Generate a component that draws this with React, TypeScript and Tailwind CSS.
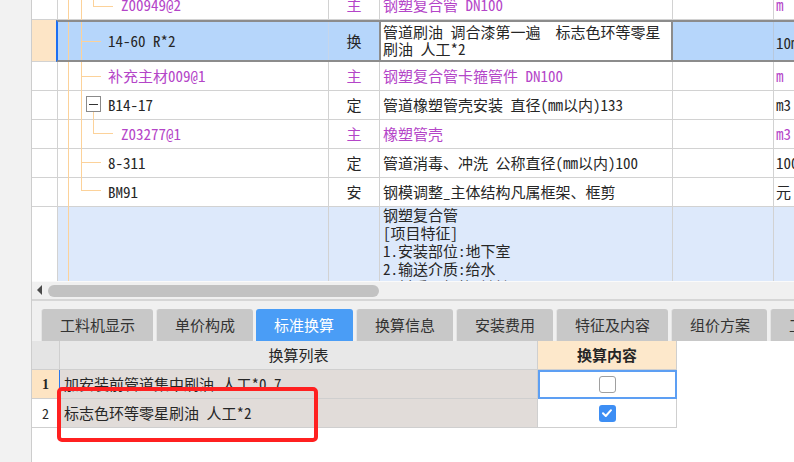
import React from "react";

const PURPLE = "text-[#b445c8]";

type RowData = {
  code: string;
  indent: string;
  codePurple?: boolean;
  type: string;
  typePurple?: boolean;
  name: string;
  namePurple?: boolean;
  unit: string;
  unitPurple?: boolean;
};

const rowsAfter: RowData[] = [
  { code: "补充主材009@1", indent: "pl-[50px]", codePurple: true, type: "主", typePurple: true, name: "钢塑复合管卡箍管件 DN100", namePurple: true, unit: "m", unitPurple: true },
  { code: "B14-17", indent: "pl-[50px]", type: "定", name: "管道橡塑管壳安装 直径(mm以内)133", unit: "m3" },
  { code: "Z03277@1", indent: "pl-[63px]", codePurple: true, type: "主", typePurple: true, name: "橡塑管壳", namePurple: true, unit: "m3", unitPurple: true },
  { code: "8-311", indent: "pl-[50px]", type: "定", name: "管道消毒、冲洗 公称直径(mm以内)100", unit: "100" },
  { code: "BM91", indent: "pl-[50px]", type: "安", name: "钢模调整_主体结构凡属框架、框剪", unit: "元" },
];

function Row({ r }: { r: RowData }) {
  return (
    <div className="flex h-[29px] border-b border-[#d2d2d2] bg-white">
      <div className="w-[26px] shrink-0 border-r border-[#d2d2d2]" />
      <div className={`w-[271px] shrink-0 border-r border-[#d2d2d2] flex items-center whitespace-nowrap ${r.indent} ${r.codePurple ? PURPLE : ""}`}>
        {r.code}
      </div>
      <div className={`w-[51px] shrink-0 border-r border-[#d2d2d2] flex items-center justify-center ${r.typePurple ? PURPLE : ""}`}>
        {r.type}
      </div>
      <div className={`w-[293px] shrink-0 border-r border-[#d2d2d2] flex items-center pl-[3px] whitespace-nowrap overflow-hidden ${r.namePurple ? PURPLE : ""}`}>
        {r.name}
      </div>
      <div className="w-[101px] shrink-0 border-r border-[#d2d2d2]" />
      <div className={`flex-1 flex items-center pl-[2px] whitespace-nowrap overflow-hidden ${r.unitPurple ? PURPLE : ""}`}>
        {r.unit}
      </div>
    </div>
  );
}

function TreeLines() {
  const c = "#fcd29a";
  return (
    <svg className="absolute left-[26px] top-0" width={271} height={281} shapeRendering="crispEdges">
      <g stroke={c} strokeWidth={1} fill="none">
        <line x1={10.5} y1={0} x2={10.5} y2={20} />
        <line x1={10.5} y1={22} x2={10.5} y2={60} />
        <line x1={10.5} y1={62} x2={10.5} y2={281} />
        <line x1={23.5} y1={0} x2={23.5} y2={20} />
        <line x1={23.5} y1={22} x2={23.5} y2={60} />
        <line x1={23.5} y1={62} x2={23.5} y2={190.5} />
        <line x1={35.5} y1={0} x2={35.5} y2={6.5} />
        <line x1={35.5} y1={6.5} x2={55} y2={6.5} />
        <line x1={23.5} y1={41.5} x2={43} y2={41.5} />
        <line x1={23.5} y1={76.5} x2={43} y2={76.5} />
        <line x1={35.5} y1={111.5} x2={35.5} y2={133.5} />
        <line x1={35.5} y1={133.5} x2={55} y2={133.5} />
        <line x1={23.5} y1={162.5} x2={43} y2={162.5} />
        <line x1={23.5} y1={190.5} x2={43} y2={190.5} />
      </g>
      <rect x={28.5} y={96.5} width={14} height={15} fill="#ffffff" stroke="#8a8a8a" strokeWidth={1} />
      <line x1={31} y1={104.5} x2={40} y2={104.5} stroke="#333" strokeWidth={1} />
    </svg>
  );
}

function TopGrid() {
  return (
    <div className="relative h-[281px] overflow-hidden bg-white shrink-0">
      <div className="-mt-[9px]">
        <Row r={{ code: "Z00949@2", indent: "pl-[63px]", codePurple: true, type: "主", typePurple: true, name: "钢塑复合管 DN100", namePurple: true, unit: "m", unitPurple: true }} />
        {/* selected row */}
        <div className="flex h-[42px]">
          <div className="w-[24px] shrink-0 bg-[#fde5c6] border-b border-[#d2d2d2]" />
          <div className="flex-1 flex border-y-2 border-[#8c8c8c] border-l-2 border-l-[#1d6ff2] bg-[#b6d6fb]">
            <div className="w-[271px] shrink-0 border-r border-[#c6d6ea] flex items-center pl-[50px] whitespace-nowrap">
              14-60 R*2
            </div>
            <div className="w-[50px] shrink-0 flex items-center justify-center">换</div>
            <div className="w-[294px] shrink-0 border-x-2 border-[#8c8c8c] bg-white pl-[2px] pt-[1px] leading-[17px] whitespace-pre overflow-hidden">
              <div>管道刷油 调合漆第一遍  标志色环等零星</div>
              <div>刷油 人工*2</div>
            </div>
            <div className="w-[101px] shrink-0 border-r border-[#b8c8dc]" />
            <div className="flex-1 flex items-center pl-[2px] pt-[4px] whitespace-nowrap overflow-hidden">10m</div>
          </div>
        </div>
        {rowsAfter.map((r) => (
          <Row key={r.code} r={r} />
        ))}
        {/* description row */}
        <div className="flex h-[110px]">
          <div className="w-[26px] shrink-0 border-r border-[#d2d2d2] bg-white" />
          <div className="w-[271px] shrink-0 border-r border-[#d2d2d2] bg-[#dde9fb]" />
          <div className="w-[51px] shrink-0 border-r border-[#d2d2d2] bg-[#dde9fb]" />
          <div className="w-[293px] shrink-0 border-r border-[#d2d2d2] bg-[#dde9fb] pl-[3px] whitespace-nowrap overflow-hidden">
            <div className="-mt-[1px] leading-[18px]">
              <div>钢塑复合管</div>
              <div>[项目特征]</div>
              <div>1.安装部位:地下室</div>
              <div>2.输送介质:给水</div>
              <div>3.材质、规格:镀锌</div>
            </div>
          </div>
          <div className="w-[101px] shrink-0 border-r border-[#d2d2d2] bg-[#dde9fb]" />
          <div className="flex-1 bg-[#dde9fb]" />
        </div>
      </div>
      <TreeLines />
    </div>
  );
}

function ScrollBar() {
  return (
    <div className="shrink-0">
      <div className="h-[18px] bg-[#f0f0f0] border-t border-[#fafafa] flex items-start">
        <div className="ml-[5px] mt-[3px] w-0 h-0 border-y-[5px] border-y-transparent border-r-[5px] border-r-[#4a4a4a]" />
        <div className="ml-[6px] mt-[3px] w-[331px] h-[12px] rounded-full bg-[#c2c2c2]" />
      </div>
      <div className="h-[2px] bg-[#d6d6d6]" />
    </div>
  );
}

const tabs = [
  { t: "工料机显示", w: "w-[112px]" },
  { t: "单价构成", w: "w-[97px]" },
  { t: "标准换算", w: "w-[97px]", active: true },
  { t: "换算信息", w: "w-[97px]" },
  { t: "安装费用", w: "w-[97px]" },
  { t: "特征及内容", w: "w-[112px]" },
  { t: "组价方案", w: "w-[96px]" },
  { t: "工程量明细", w: "w-[112px]" },
];

function Tabs() {
  return (
    <div className="h-[40px] shrink-0 bg-[#f0f0f0] flex items-end pl-[9px] gap-[3px] overflow-hidden">
      {tabs.map((tab) => (
        <div
          key={tab.t}
          className={`h-[32px] shrink-0 ${tab.w} rounded-t-[3px] flex items-center pl-[18px] whitespace-nowrap ${
            tab.active ? "bg-[#4a9df6] text-white" : "bg-[#c8c8c8] text-[#333] border-l border-[#e4e4e4]"
          }`}
        >
          {tab.t}
        </div>
      ))}
    </div>
  );
}

function Check({ checked }: { checked?: boolean }) {
  if (checked) {
    return (
      <div className="w-[17px] h-[17px] rounded-[3px] bg-[#3d8ef4] flex items-center justify-center">
        <svg width="12" height="12" viewBox="0 0 12 12">
          <path d="M2 6.2 L4.8 9 L10 3.2" stroke="#fff" strokeWidth="2" fill="none" strokeLinecap="round" strokeLinejoin="round" />
        </svg>
      </div>
    );
  }
  return <div className="w-[17px] h-[17px] rounded-[3px] border border-[#a0a0a0] bg-white" />;
}

function BottomGrid() {
  return (
    <div className="flex-1 bg-white relative">
      <div className="flex h-[29px]">
        <div className="w-[28px] shrink-0 bg-[#e4e4e4] border-r border-b border-[#cfcfcf]" />
        <div className="w-[478px] shrink-0 bg-[#e8e8e8] border-r border-b border-[#cfcfcf] flex items-center justify-center">
          换算列表
        </div>
        <div className="w-[139px] shrink-0 bg-[#fde8cb] border-r border-b border-[#cfcfcf] flex items-center justify-center font-bold">
          换算内容
        </div>
      </div>
      <div className="flex h-[29px]">
        <div className="w-[28px] shrink-0 bg-[#fde4c3] border-r border-r-[#2a78ee] border-b border-b-[#cfcfcf] flex items-center justify-center font-['Liberation_Serif',serif] font-bold text-[14px]">
          1
        </div>
        <div className="w-[478px] shrink-0 bg-[#e1dcd9] border-r border-b border-[#cfcfcf] flex items-center pl-[4px] whitespace-nowrap">
          加安装前管道集中刷油 人工*0.7
        </div>
        <div className="w-[139px] shrink-0 border-2 border-[#5d9ff3] flex items-center justify-center">
          <Check />
        </div>
      </div>
      <div className="flex h-[29px]">
        <div className="w-[28px] shrink-0 bg-white border-r border-b border-[#cfcfcf] flex items-center justify-center text-[14px]">
          2
        </div>
        <div className="w-[478px] shrink-0 bg-[#e1dcd9] border-r border-b border-[#cfcfcf] flex items-center pl-[4px] whitespace-nowrap">
          标志色环等零星刷油 人工*2
        </div>
        <div className="w-[139px] shrink-0 border-r border-b border-[#cfcfcf] flex items-center justify-center">
          <Check checked />
        </div>
      </div>
      <div className="absolute left-[25px] top-[46px] w-[261px] h-[55px] border-[4px] border-[#ff2020] rounded-[5px]" />
    </div>
  );
}

export default function App() {
  return (
    <div className="w-[794px] h-[462px] overflow-hidden flex bg-[#f2f2f2] text-[15px] text-[#262626] font-['Noto_Sans_Mono_CJK_SC','Noto_Sans_CJK_SC',sans-serif]">
      <div className="w-[31px] shrink-0 bg-[#f2f2f2]" />
      <div className="flex-1 min-w-0 flex flex-col border-l border-[#cdcdcd]">
        <TopGrid />
        <ScrollBar />
        <Tabs />
        <BottomGrid />
      </div>
    </div>
  );
}
